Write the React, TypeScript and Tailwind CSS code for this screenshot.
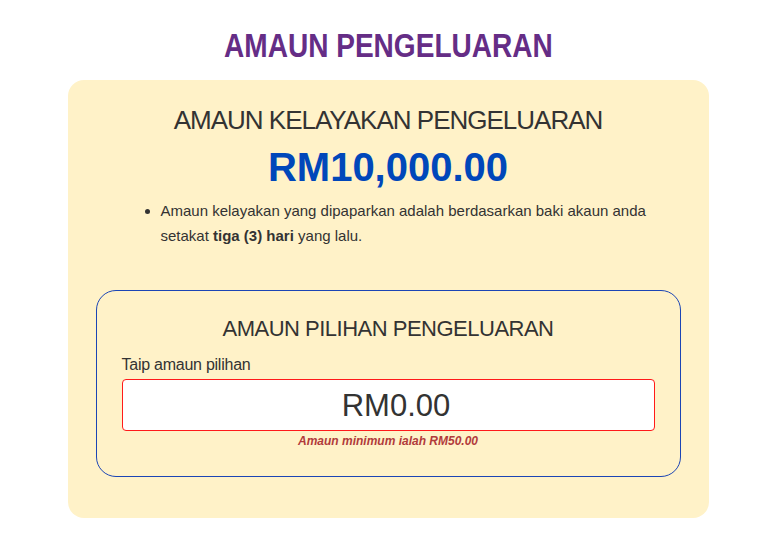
export default function App() {
  return (
    <div className="min-h-[553px] w-[776px] bg-white font-['Liberation_Sans',sans-serif] text-[#333]">
      <div className="flex flex-col items-center pt-[28px]">
        {/* condensed heading: Franklin Gothic-ish look via horizontal squeeze */}
        <h1 className="origin-center scale-x-[0.85] text-[33px] font-bold leading-[36px] text-[#652d86]">
          AMAUN PENGELUARAN
        </h1>

        <div className="mt-[16px] w-[641px] rounded-[16px] bg-[#fff2c8] px-[28px] pb-[41px] pt-[24px]">
          <h2 className="text-center text-[26px] leading-[32px] tracking-[-1px] text-[#333]">
            AMAUN KELAYAKAN PENGELUARAN
          </h2>
          <div className="mt-[8px] text-center text-[40px] font-bold leading-[46px] text-[#0047ba]">
            RM10,000.00
          </div>

          <ul className="mt-[8px] list-disc pl-[65px] pr-[30px] text-[15px] leading-[25px] text-[#333]">
            <li>
              Amaun kelayakan yang dipaparkan adalah berdasarkan baki akaun anda
              setakat <b>tiga (3) hari</b> yang lalu.
            </li>
          </ul>

          <div className="mt-[42px] rounded-[20px] border border-[#1b45b5] px-[25px] pb-[27px] pt-[24px]">
            <h3 className="text-center text-[22px] leading-[28px] tracking-[-0.5px] text-[#333]">
              AMAUN PILIHAN PENGELUARAN
            </h3>
            <label className="mt-[12px] block text-[16px] leading-[20px] tracking-[-0.25px] text-[#333]">
              Taip amaun pilihan
            </label>
            <div className="mt-[4px] flex h-[52px] items-center justify-center rounded-[4px] border border-[#ff1a1a] bg-white pl-[16px] text-[31px] leading-none text-[#333]">
              RM0.00
            </div>
            <p className="mt-[2px] text-center text-[12px] font-bold italic leading-[16px] text-[#b13b3b]">
              Amaun minimum ialah RM50.00
            </p>
          </div>
        </div>
      </div>
    </div>
  );
}
